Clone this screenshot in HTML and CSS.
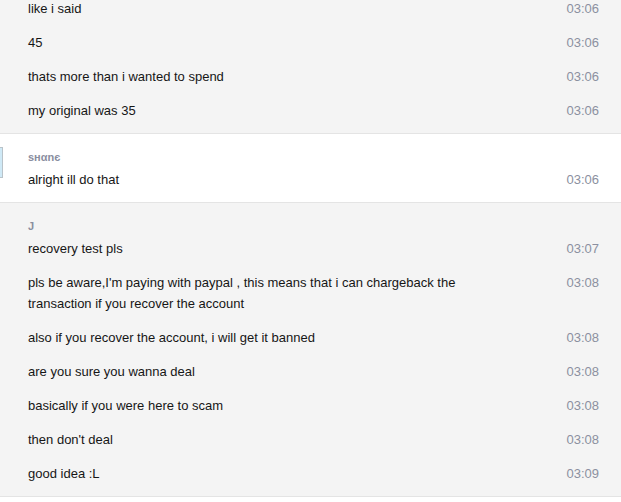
FILE: index.html
```html
<!DOCTYPE html>
<html>
<head>
<meta charset="utf-8">
<link rel="stylesheet" href="styles.css">
</head>
<body>
<div class="chat">
  <div class="group first">
    <div class="row"><div class="text">like i said</div><div class="time">03:06</div></div>
    <div class="row"><div class="text">45</div><div class="time">03:06</div></div>
    <div class="row"><div class="text">thats more than i wanted to spend</div><div class="time">03:06</div></div>
    <div class="row"><div class="text">my original was 35</div><div class="time">03:06</div></div>
  </div>
  <div class="group white">
    <div class="avatar"></div>
    <div class="name">sнαnє</div>
    <div class="row"><div class="text">alright ill do that</div><div class="time">03:06</div></div>
  </div>
  <div class="group">
    <div class="name">J</div>
    <div class="row"><div class="text">recovery test pls</div><div class="time">03:07</div></div>
    <div class="row"><div class="text">pls be aware,I'm paying with paypal , this means that i can chargeback the transaction if you recover the account</div><div class="time">03:08</div></div>
    <div class="row"><div class="text">also if you recover the account, i will get it banned</div><div class="time">03:08</div></div>
    <div class="row"><div class="text">are you sure you wanna deal</div><div class="time">03:08</div></div>
    <div class="row"><div class="text">basically if you were here to scam</div><div class="time">03:08</div></div>
    <div class="row"><div class="text">then don't deal</div><div class="time">03:08</div></div>
    <div class="row"><div class="text">good idea :L</div><div class="time">03:09</div></div>
  </div>
</div>
</body>
</html>
```
FILE: styles.css
```css
html, body {
  margin: 0;
  padding: 0;
  background: #ffffff;
  overflow: hidden;
}
body {
  font-family: "Liberation Sans", Arial, Helvetica, sans-serif;
  font-size: 13px;
  color: #161616;
}
.chat {
  margin-top: -8px;
}
.group {
  position: relative;
  background: #f4f4f4;
  border-bottom: 1px solid #e4e4e4;
  padding: 17px 0 5px;
}
.group.first {
  padding-top: 0;
}
.group.white {
  background: #ffffff;
}
.avatar {
  position: absolute;
  left: -30px;
  top: 13px;
  width: 31px;
  height: 29px;
  background: #cfe9f6;
  border: 1px solid #b9c3c9;
}
.name {
  padding-left: 28px;
  font-size: 11px;
  line-height: 12px;
  font-weight: bold;
  color: #8a8e9f;
}
.row {
  display: flex;
  align-items: flex-start;
  padding: 6px 22px 7px 28px;
  line-height: 21px;
}
.text {
  width: 470px;
}
.time {
  margin-left: auto;
  color: #8b90a0;
}
```
